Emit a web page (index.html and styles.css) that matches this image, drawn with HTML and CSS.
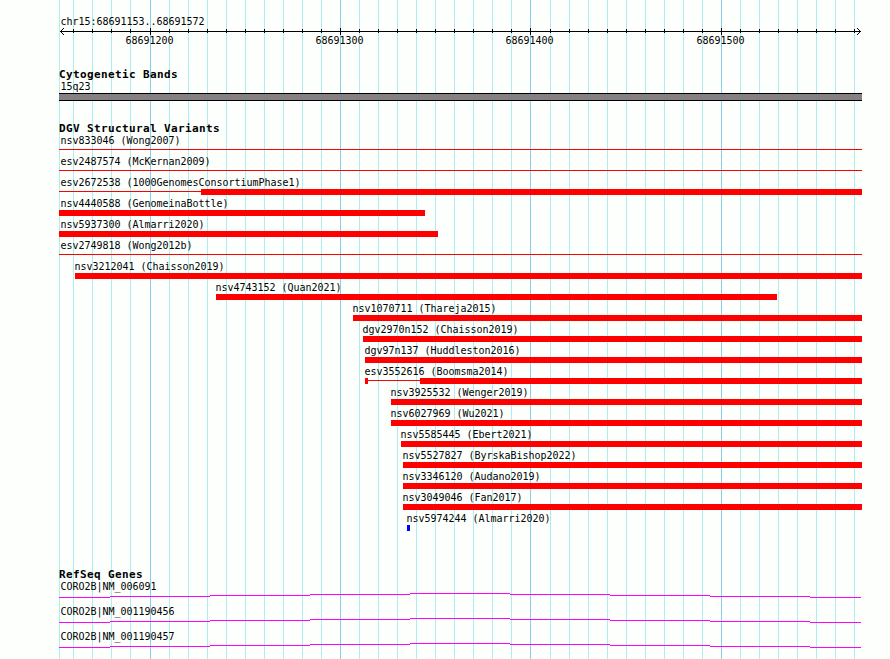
FILE: index.html
```
<!DOCTYPE html>
<html lang="en">
<head>
    <meta charset="UTF-8">
    <meta name="viewport" content="width=device-width, initial-scale=1.0">
    <title>chr15:68691153..68691572</title>
    <link rel="stylesheet" href="styles.css">
</head>
<body>

    <!-- vertical grid behind all tracks -->
    <svg class="grid" width="890" height="659">
        <path class="minor" d="M59.5 0v659M73.5 0v659M92.5 0v659M111.5 0v659M130.5 0v659M169.5 0v659M188.5 0v659M207.5 0v659M226.5 0v659M245.5 0v659M264.5 0v659M283.5 0v659M302.5 0v659M321.5 0v659M359.5 0v659M378.5 0v659M397.5 0v659M416.5 0v659M435.5 0v659M454.5 0v659M473.5 0v659M492.5 0v659M511.5 0v659M550.5 0v659M569.5 0v659M588.5 0v659M607.5 0v659M626.5 0v659M645.5 0v659M664.5 0v659M683.5 0v659M702.5 0v659M740.5 0v659M759.5 0v659M778.5 0v659M797.5 0v659M816.5 0v659M835.5 0v659M854.5 0v659"/>
        <path class="major" d="M150.5 0v659M340.5 0v659M530.5 0v659M721.5 0v659"/>
    </svg>

    <main class="tracks">
        <svg class="ruler" viewBox="59 0 803 66" width="803" height="66">
            <text x="60.5" y="25">chr15:68691153..68691572</text>
            <path d="M60 31.5H861"/>
            <path d="M60.5 31v1M61.5 30v3M62.5 29v1M62.5 33v1M63.5 28v1M63.5 34v1M860.5 31v1M859.5 30v3M858.5 29v1M858.5 33v1M857.5 28v1M857.5 34v1"/>
            <path d="M73.5 29v4M92.5 29v4M111.5 29v4M130.5 29v4M169.5 29v4M188.5 29v4M207.5 29v4M226.5 29v4M245.5 29v4M264.5 29v4M283.5 29v4M302.5 29v4M321.5 29v4M359.5 29v4M378.5 29v4M397.5 29v4M416.5 29v4M435.5 29v4M454.5 29v4M473.5 29v4M492.5 29v4M511.5 29v4M550.5 29v4M569.5 29v4M588.5 29v4M607.5 29v4M626.5 29v4M645.5 29v4M664.5 29v4M683.5 29v4M702.5 29v4M740.5 29v4M759.5 29v4M778.5 29v4M797.5 29v4M816.5 29v4M835.5 29v4M854.5 29v4"/>
            <path d="M150.5 28v7M340.5 28v7M530.5 28v7M721.5 28v7"/>
            <text x="125.5" y="44">68691200</text>
            <text x="315.5" y="44">68691300</text>
            <text x="505.5" y="44">68691400</text>
            <text x="696.5" y="44">68691500</text>
        </svg>

        <section class="track cyto">
            <h2>Cytogenetic Bands</h2>
            <div class="label clipped">15q23</div>
            <div class="band"></div>
        </section>

        <section class="track variants">
            <h2>DGV Structural Variants</h2>
            <div class="variant"><div class="label clipped">nsv833046 (Wong2007)</div><div class="glyph"><i class="line"></i></div></div>
            <div class="variant"><div class="label clipped">esv2487574 (McKernan2009)</div><div class="glyph"><i class="line"></i></div></div>
            <div class="variant"><div class="label clipped">esv2672538 (1000GenomesConsortiumPhase1)</div><div class="glyph"><i class="line" style="width: 142px"></i><i class="bar"></i></div></div>
            <div class="variant"><div class="label clipped">nsv4440588 (GenomeinaBottle)</div><div class="glyph"><i class="bar" style="width: 366px"></i></div></div>
            <div class="variant"><div class="label clipped">nsv5937300 (Almarri2020)</div><div class="glyph"><i class="bar" style="width: 379px"></i></div></div>
            <div class="variant"><div class="label clipped">esv2749818 (Wong2012b)</div><div class="glyph"><i class="line"></i></div></div>
            <div class="variant" style="margin-left: 16px"><div class="label">nsv3212041 (Chaisson2019)</div><div class="glyph"><i class="bar"></i></div></div>
            <div class="variant" style="margin-left: 157px"><div class="label">nsv4743152 (Quan2021)</div><div class="glyph"><i class="bar" style="width: 561px"></i></div></div>
            <div class="variant" style="margin-left: 294px"><div class="label">nsv1070711 (Thareja2015)</div><div class="glyph"><i class="bar"></i></div></div>
            <div class="variant" style="margin-left: 304px"><div class="label">dgv2970n152 (Chaisson2019)</div><div class="glyph"><i class="bar"></i></div></div>
            <div class="variant" style="margin-left: 306px"><div class="label">dgv97n137 (Huddleston2016)</div><div class="glyph"><i class="bar"></i></div></div>
            <div class="variant" style="margin-left: 306px"><div class="label">esv3552616 (Boomsma2014)</div><div class="glyph"><i class="bar" style="width: 3px"></i><i class="line" style="width: 52px"></i><i class="bar"></i></div></div>
            <div class="variant" style="margin-left: 332px"><div class="label">nsv3925532 (Wenger2019)</div><div class="glyph"><i class="bar"></i></div></div>
            <div class="variant" style="margin-left: 332px"><div class="label">nsv6027969 (Wu2021)</div><div class="glyph"><i class="bar"></i></div></div>
            <div class="variant" style="margin-left: 342px"><div class="label">nsv5585445 (Ebert2021)</div><div class="glyph"><i class="bar"></i></div></div>
            <div class="variant" style="margin-left: 344px"><div class="label">nsv5527827 (ByrskaBishop2022)</div><div class="glyph"><i class="bar"></i></div></div>
            <div class="variant" style="margin-left: 344px"><div class="label">nsv3346120 (Audano2019)</div><div class="glyph"><i class="bar"></i></div></div>
            <div class="variant" style="margin-left: 344px"><div class="label">nsv3049046 (Fan2017)</div><div class="glyph"><i class="bar"></i></div></div>
            <div class="variant" style="margin-left: 348px"><div class="label">nsv5974244 (Almarri2020)</div><div class="glyph"><i class="bar gain" style="width: 3px"></i></div></div>
        </section>

        <section class="track genes">
            <h2>RefSeq Genes</h2>
            <div class="gene">
                <div class="label clipped">CORO2B|NM_006091</div>
                <svg width="802" height="12"><path d="M0 4.5h51M51 3.5h100M151 2.5h100M251 1.5h100M351 .5h100M451 1.5h100M551 2.5h100M651 3.5h100M751 4.5h51"/></svg>
            </div>
            <div class="gene">
                <div class="label clipped">CORO2B|NM_001190456</div>
                <svg width="802" height="12"><path d="M0 4.5h51M51 3.5h100M151 2.5h100M251 1.5h100M351 .5h100M451 1.5h100M551 2.5h100M651 3.5h100M751 4.5h51"/></svg>
            </div>
            <div class="gene">
                <div class="label clipped">CORO2B|NM_001190457</div>
                <svg width="802" height="12"><path d="M0 4.5h51M51 3.5h100M151 2.5h100M251 1.5h100M351 .5h100M451 1.5h100M551 2.5h100M651 3.5h100M751 4.5h51"/></svg>
            </div>
        </section>
    </main>

</body>
</html>
```

FILE: styles.css
```
body {
    margin: 0;
    height: 659px;
    overflow: hidden;
    position: relative;
    background-color: #fdfffc;
    color: black;
    font-family: "DejaVu Sans Mono", monospace;
    font-size: 10px;
    letter-spacing: -0.02px;
}

svg {
    display: block;
}

.grid {
    position: absolute;
    top: 0;
    left: 0;
}

.grid path {
    fill: none;
    stroke: #afeeee;
}

.grid .major {
    stroke: #87ceeb;
}

.tracks {
    position: relative;
    width: 803px;
    margin-left: 59px;
}

.ruler path {
    fill: none;
    stroke: black;
}

.track {
    padding-top: 3px;
}

h2 {
    height: 11px;
    margin: 0;
    font-size: 11px;
    line-height: 12px;
    letter-spacing: 0.378px;
}

.label {
    height: 13px;
    margin-left: -0.5px;
    line-height: 13px;
    white-space: nowrap;
}

.label.clipped {
    margin-left: 1.5px;
}

.cyto {
    height: 51px;
}

.band {
    height: 6px;
    background-color: #848084;
    border-top: 1px solid black;
    border-bottom: 1px solid black;
}

.variants {
    height: 446px;
    box-sizing: border-box;
}

.variant {
    height: 21px;
}

.glyph {
    display: flex;
    align-items: flex-start;
    height: 6px;
}

.line {
    flex: 0 0 auto;
    width: 100%;
    height: 1px;
    margin-top: 2px;
    background-color: red;
}

.bar {
    flex: 0 0 auto;
    height: 6px;
    background-color: red;
}

.bar:not([style]) {
    flex: 1 0 0;
}

.gain {
    background-color: blue;
}

.gene {
    height: 25px;
}

.gene path {
    fill: none;
    stroke: magenta;
}
```
